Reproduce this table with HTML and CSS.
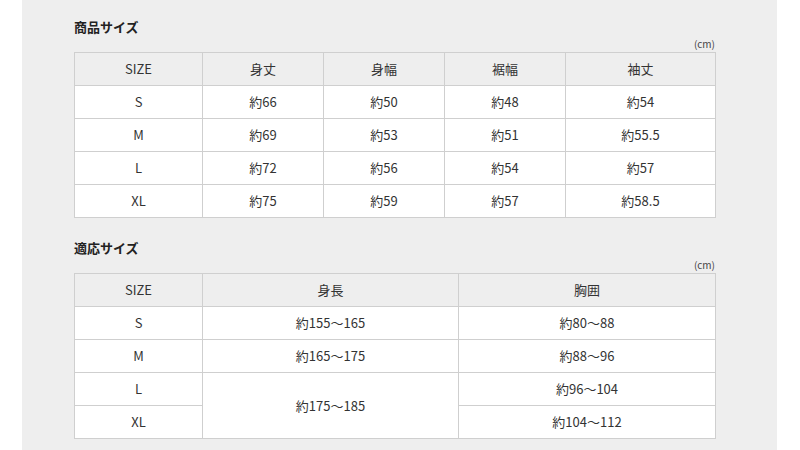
FILE: index.html
```html
<!DOCTYPE html>
<html lang="ja">
<head>
<meta charset="utf-8">
<title>サイズ</title>
<link rel="stylesheet" href="styles.css">
</head>
<body>
<div class="panel">
  <section class="sec">
    <h2 class="title">商品サイズ</h2>
    <div class="unit">(cm)</div>
    <table class="size-table t1">
      <colgroup><col class="c-size"><col class="c-n"><col class="c-n"><col class="c-n"><col class="c-last"></colgroup>
      <thead><tr><th>SIZE</th><th>身丈</th><th>身幅</th><th>裾幅</th><th>袖丈</th></tr></thead>
      <tbody>
        <tr><td>S</td><td>約66</td><td>約50</td><td>約48</td><td>約54</td></tr>
        <tr><td>M</td><td>約69</td><td>約53</td><td>約51</td><td>約55.5</td></tr>
        <tr><td>L</td><td>約72</td><td>約56</td><td>約54</td><td>約57</td></tr>
        <tr><td>XL</td><td>約75</td><td>約59</td><td>約57</td><td>約58.5</td></tr>
      </tbody>
    </table>
  </section>
  <section class="sec sec2">
    <h2 class="title">適応サイズ</h2>
    <div class="unit">(cm)</div>
    <table class="size-table t2">
      <colgroup><col class="c-size"><col class="c-h"><col class="c-c"></colgroup>
      <thead><tr><th>SIZE</th><th>身長</th><th>胸囲</th></tr></thead>
      <tbody>
        <tr><td>S</td><td>約155～165</td><td>約80～88</td></tr>
        <tr><td>M</td><td>約165～175</td><td>約88～96</td></tr>
        <tr><td>L</td><td rowspan="2">約175～185</td><td>約96～104</td></tr>
        <tr><td>XL</td><td>約104～112</td></tr>
      </tbody>
    </table>
  </section>
</div>
</body>
</html>
```
FILE: styles.css
```css
html, body {
  margin: 0;
  padding: 0;
  background: #ffffff;
}
body {
  font-family: "Noto Sans CJK JP", "Noto Sans", sans-serif;
  color: #333333;
}
.panel {
  margin-left: 22px;
  width: 755px;
  height: 450px;
  box-sizing: border-box;
  background: #eeeeee;
  padding: 17px 62px 0 52px;
}
.title {
  margin: 0;
  font-size: 13px;
  line-height: 20px;
  font-weight: bold;
  color: #222222;
}
.unit {
  margin: 0 0 2px;
  text-align: right;
  font-size: 10px;
  line-height: 13px;
  color: #444444;
}
.sec2 {
  margin-top: 20px;
}
.size-table {
  width: 641px;
  border-collapse: collapse;
  table-layout: fixed;
  border: 1px solid #b4b4b4;
  font-size: 13px;
}
.size-table th,
.size-table td {
  height: 32px;
  padding: 0;
  border: 1px solid #cfcfcf;
  text-align: center;
  vertical-align: middle;
  font-weight: normal;
  line-height: 16px;
}
.size-table th {
  background: #eeeeee;
}
.size-table td {
  background: #ffffff;
}
.c-size { width: 128px; }
.c-n { width: 121px; }
.c-last { width: 150px; }
.c-h { width: 256px; }
.c-c { width: 257px; }
```
